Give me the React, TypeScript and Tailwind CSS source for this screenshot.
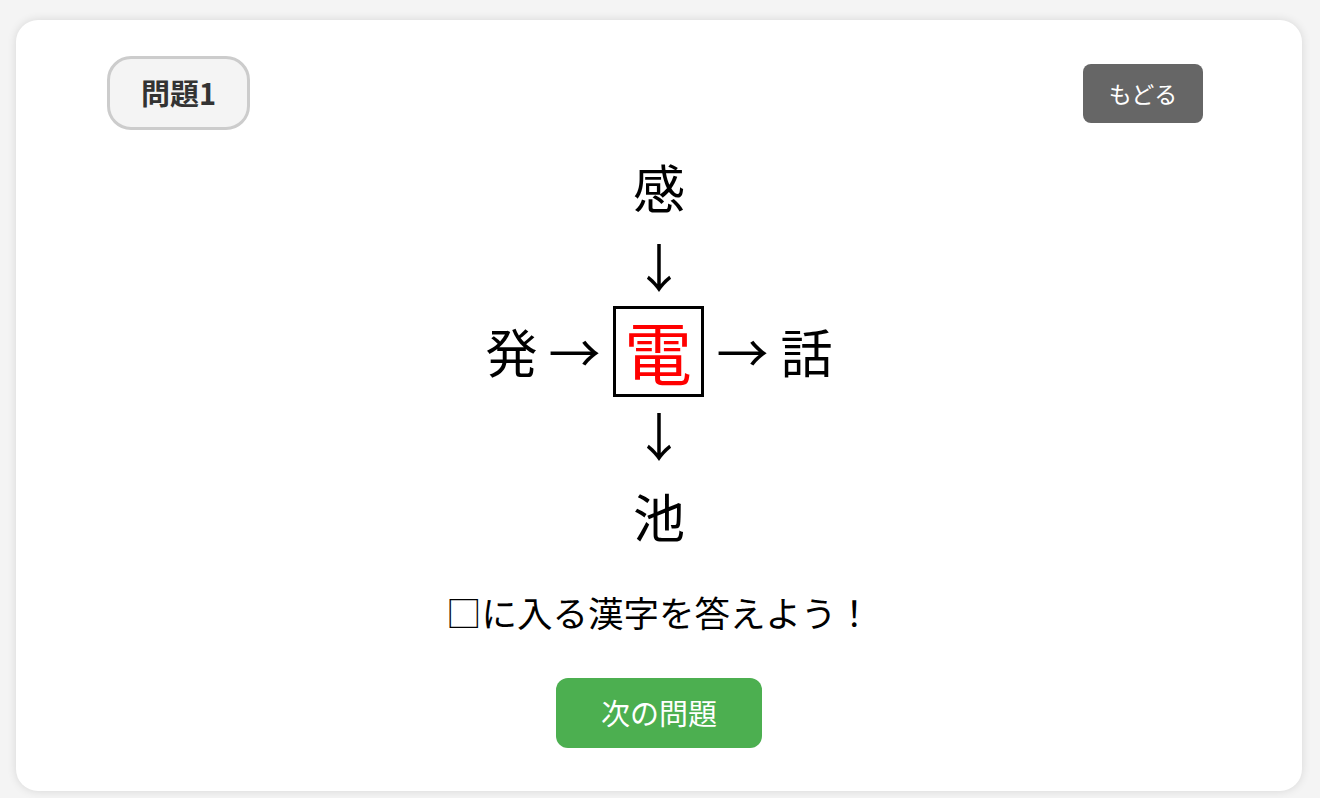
import React from "react";

const jp = { fontFamily: '"Noto Sans CJK JP", "Noto Sans", sans-serif' };

export default function App() {
  return (
    <div className="min-h-[798px] w-full bg-[#f4f4f4] pt-[20px] pl-[16px] pr-[18px] pb-[7px]" style={jp}>
      <div className="h-[771px] w-full rounded-[22px] bg-white shadow-[0_0_10px_rgba(0,0,0,0.12)] flex flex-col">
        <div className="flex items-center justify-between pl-[91px] pr-[99px] pt-[36px]">
          <div className="flex h-[74px] w-[143px] items-center justify-center rounded-[24px] border-[3px] border-[#cccccc] bg-[#f4f4f4] text-[29px] font-bold text-[#333333]">
            問題1
          </div>
          <button className="flex h-[59px] w-[120px] items-center justify-center rounded-[8px] bg-[#666666] text-[23px] text-white">
            もどる
          </button>
        </div>

        <div className="flex flex-col items-center text-[52px] leading-none text-black">
          <div className="mt-[16px] flex h-[82px] items-center justify-center">感</div>
          <div className="flex h-[75px] items-center justify-center">↓</div>
          <div className="flex h-[96px] items-center justify-center">
            <span className="flex w-[52px] justify-center">発</span>
            <span className="ml-[11px] flex w-[52px] justify-center">→</span>
            <span className="ml-[12px] flex h-[91px] w-[91px] items-center justify-center border-[3px] border-black text-[68px] text-[#ff0000]">
              電
            </span>
            <span className="ml-[13px] flex w-[52px] justify-center">→</span>
            <span className="ml-[12px] flex w-[52px] justify-center">話</span>
          </div>
          <div className="flex h-[72px] items-center justify-center">↓</div>
          <div className="flex h-[90px] items-center justify-center">池</div>
        </div>

        <div className="mt-[33px] flex justify-center text-[35.5px] leading-none text-black">
          □に入る漢字を答えよう！
        </div>

        <div className="mt-[48px] flex justify-center">
          <button className="flex h-[70px] w-[206px] items-center justify-center rounded-[12px] bg-[#4caf50] text-[29px] text-white">
            次の問題
          </button>
        </div>
      </div>
    </div>
  );
}
